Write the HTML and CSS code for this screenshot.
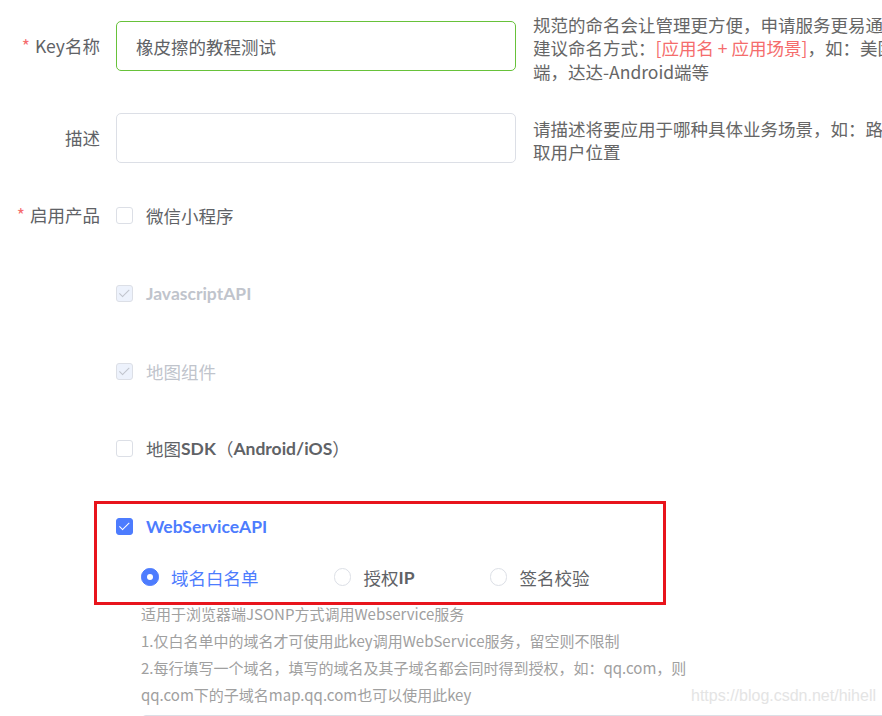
FILE: index.html
```html
<!DOCTYPE html>
<html lang="zh-CN">
<head>
    <meta charset="UTF-8">
    <title>Key设置</title>
    <link rel="stylesheet" href="styles.css">
</head>
<body>
<form class="form">
    <div class="item">
        <label class="label"><i class="req">*</i>Key名称</label>
        <input class="input focus" type="text" value="橡皮擦的教程测试">
        <div class="tip">
            <p>规范的命名会让管理更方便，申请服务更易通过。</p>
            <p>建议命名方式：<span class="red">[应用名 + 应用场景]</span>，如：美团外卖-iOS</p>
            <p>端，达达-Android端等</p>
        </div>
    </div>
    <div class="item">
        <label class="label">描述</label>
        <input class="input" type="text">
        <div class="tip">
            <p>请描述将要应用于哪种具体业务场景，如：路线规划、获</p>
            <p>取用户位置</p>
        </div>
    </div>
    <div class="item products">
        <label class="label label-tall"><i class="req">*</i>启用产品</label>
        <div class="checks">
            <div class="check"><span class="box"></span>微信小程序</div>
            <div class="check disabled"><span class="box"></span><b class="en">JavascriptAPI</b></div>
            <div class="check disabled"><span class="box"></span>地图组件</div>
            <div class="check"><span class="box"></span>地图<b class="en">SDK</b>（<b class="en">Android/iOS</b>）</div>
            <div class="ws">
                <div class="check on"><span class="box"></span><b class="en">WebServiceAPI</b></div>
                <div class="ws-body">
                    <div class="radios">
                        <div class="radio on"><span class="dot"></span>域名白名单</div>
                        <div class="radio"><span class="dot"></span>授权<b class="en">IP</b></div>
                        <div class="radio"><span class="dot"></span>签名校验</div>
                    </div>
                    <div class="desc">
                        <p>适用于浏览器端JSONP方式调用Webservice服务</p>
                        <p>1.仅白名单中的域名才可使用此key调用WebService服务，留空则不限制</p>
                        <p>2.每行填写一个域名，填写的域名及其子域名都会同时得到授权，如：qq.com，则</p>
                        <p>qq.com下的子域名map.qq.com也可以使用此key</p>
                    </div>
                    <div class="area"></div>
                </div>
                <!-- 截图上的红框标注 -->
                <div class="mark"></div>
            </div>
        </div>
    </div>
</form>
<div class="watermark">https://blog.csdn.net/hihell</div>
</body>
</html>
```

FILE: styles.css
```css
html,body{
    margin: 0;
    padding: 0;
    overflow: hidden;
    background: #fff;
}
body{
    font-family: "Noto Sans CJK SC", "Microsoft YaHei", sans-serif;
    color: #606266;
    position: relative;
    height: 716px;
}
p{
    margin: 0;
}
.form{
    padding-top: 21px;
}
.item{
    display: flex;
    align-items: center;
    height: 50px;
    margin-bottom: 42px;
}
.item:nth-child(2){
    margin-bottom: 13px;
}
.label{
    width: 116px;
    flex-shrink: 0;
    box-sizing: border-box;
    padding-right: 16px;
    text-align: right;
    font-size: 17.5px;
    line-height: 24px;
    color: #606266;
}
.req{
    font-style: normal;
    color: #f56c6c;
    margin-right: 5px;
}
.input{
    width: 400px;
    height: 50px;
    flex-shrink: 0;
    box-sizing: border-box;
    border: 1px solid #dcdfe6;
    border-radius: 5px;
    padding: 0 19px;
    font-family: inherit;
    font-size: 17.5px;
    color: #606266;
    outline: none;
    background: #fff;
}
.input.focus{
    border-color: #67c23a;
}
.tip{
    margin-left: 17px;
    margin-top: 4px;
    white-space: nowrap;
    font-size: 17.5px;
    line-height: 23.5px;
    color: #666;
}
.red{
    color: #f56c6c;
}
.products{
    height: auto;
    align-items: flex-start;
    margin-bottom: 0;
}
.label-tall{
    line-height: 78px;
}
.checks{
    flex: 1;
}
.check{
    display: flex;
    align-items: center;
    height: 78px;
    font-size: 17.5px;
    color: #606266;
    white-space: nowrap;
}
.check:nth-child(4){
    height: 77px;
}
.en{
    font-family: Lato, "Noto Sans CJK SC", sans-serif;
    font-weight: 700;
}
.box{
    position: relative;
    width: 17px;
    height: 17px;
    box-sizing: border-box;
    border: 1px solid #dcdfe6;
    border-radius: 3px;
    background: #fff;
    margin-right: 13px;
    flex-shrink: 0;
}
.check.disabled{
    color: #c0c4cc;
}
.check.disabled .box{
    background: #edf2fc;
}
.check.disabled .box:after,
.check.on .box:after{
    content: "";
    position: absolute;
    left: 5px;
    top: 1.5px;
    width: 4px;
    height: 8.5px;
    border: solid #c0c4cc;
    border-width: 0 1.25px 1.25px 0;
    transform: rotate(45deg);
}
.check.on{
    color: #4d7cfe;
}
.check.on .box{
    background: #4d7cfe;
    border-color: #4d7cfe;
}
.check.on .box:after{
    border-color: #fff;
}
.ws{
    position: relative;
}
.ws-body{
    padding-left: 25px;
}
.radios{
    display: flex;
    align-items: center;
    height: 22px;
    margin-top: 1px;
}
.radio{
    display: flex;
    align-items: center;
    margin-right: 75px;
    font-size: 17.5px;
    color: #606266;
    white-space: nowrap;
}
.dot{
    position: relative;
    width: 17.5px;
    height: 17.5px;
    box-sizing: border-box;
    border: 1px solid #dcdfe6;
    border-radius: 50%;
    background: #fff;
    margin-right: 12.5px;
}
.radio.on{
    color: #4d7cfe;
}
.radio.on .dot{
    background: #4d7cfe;
    border-color: #4d7cfe;
}
.radio.on .dot:after{
    content: "";
    position: absolute;
    left: 50%;
    top: 50%;
    width: 6px;
    height: 6px;
    margin: -3px 0 0 -3px;
    border-radius: 50%;
    background: #fff;
}
.desc{
    margin-top: 12px;
    font-size: 15px;
    line-height: 27px;
    color: #a0a0a0;
    white-space: nowrap;
}
.area{
    margin-top: 7px;
    width: 800px;
    height: 120px;
    border: 1px solid #dcdfe6;
    border-radius: 5px;
}
.mark{
    position: absolute;
    left: -22px;
    top: 14px;
    width: 572px;
    height: 104px;
    box-sizing: border-box;
    border: 3px solid #e8141c;
    pointer-events: none;
}
.watermark{
    position: absolute;
    left: 691px;
    top: 687px;
    font-family: "Liberation Sans", Arial, sans-serif;
    font-size: 16px;
    color: #e4e4e4;
}
```
